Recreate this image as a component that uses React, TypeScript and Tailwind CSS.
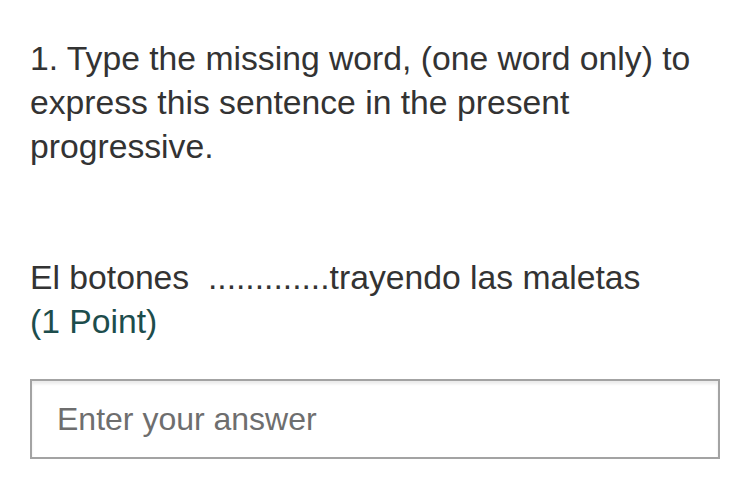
export default function App() {
  return (
    <div className="min-h-screen bg-white font-['Liberation_Sans',Arial,sans-serif] text-[#333333]">
      <div className="px-[30px] pt-[36px]">
        <p className="text-[33.7px] leading-[44px]">
          1. Type the missing word, (one word only) to express this sentence in the present
          progressive.
        </p>
        <div className="mt-[87px] text-[33.7px] leading-[44px]">
          <p>El botones&nbsp;&nbsp;.............trayendo las maletas</p>
          <p className="text-[#1d4d4c]">(1 Point)</p>
        </div>
        <div className="mt-[36px] w-[690px]">
          <input
            type="text"
            placeholder="Enter your answer"
            className="h-[80px] w-full border-2 border-[#a3a3a3] bg-white px-[25px] text-[32px] text-[#333333] shadow-[inset_0_3px_3px_rgba(0,0,0,0.08)] outline-none placeholder:text-[#6e6e6e]"
          />
        </div>
      </div>
    </div>
  );
}
